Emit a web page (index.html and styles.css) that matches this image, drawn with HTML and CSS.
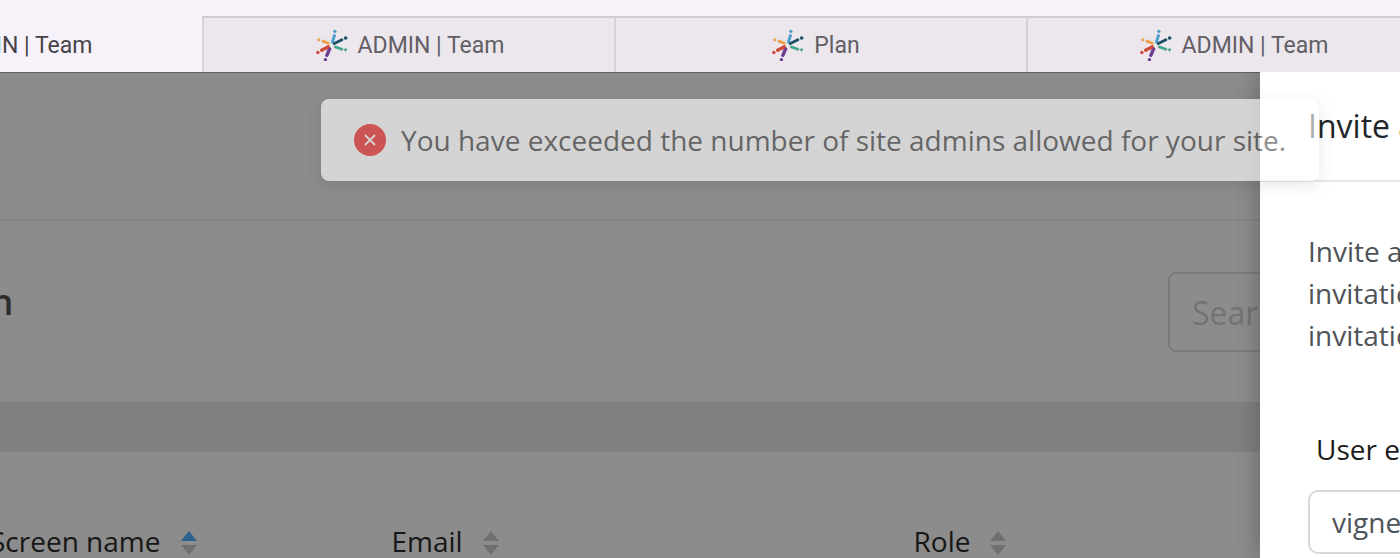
FILE: index.html
```html
<!DOCTYPE html>
<html lang="en">
<head>
<meta charset="utf-8">
<title>ADMIN | Team</title>
<link rel="stylesheet" href="styles.css">
</head>
<body>
<svg class="defs" width="0" height="0" aria-hidden="true">
  <symbol id="logo" viewBox="0 0 34 34">
    <g fill="none" stroke-linecap="round">
      <path d="M17.5 14 19.6 7" stroke="#4f9fc9" stroke-width="3.2"/>
      <circle cx="20" cy="2.5" r="1.8" fill="#4f9fc9"/>
      <path d="M19.5 15.5 27.5 11.5" stroke="#1c4f63" stroke-width="3"/>
      <circle cx="31.5" cy="9.5" r="1.9" fill="#1c4f63"/>
      <path d="M20.5 19 27.5 21.5" stroke="#4aa58d" stroke-width="3"/>
      <circle cx="31.5" cy="22" r="1.6" fill="#4aa58d"/>
      <path d="M14.5 21 11.5 28" stroke="#6a3a97" stroke-width="3.6"/>
      <circle cx="10" cy="32.5" r="1.8" fill="#6a3a97"/>
      <path d="M13 19 6 22.5" stroke="#d24a3a" stroke-width="3.6"/>
      <circle cx="2" cy="25" r="1.8" fill="#d24a3a"/>
      <path d="M13 15 7.5 13" stroke="#e9a34e" stroke-width="3.2"/>
      <circle cx="3" cy="11.5" r="1.7" fill="#e9a34e"/>
    </g>
  </symbol>
  <symbol id="sort" viewBox="0 0 16 24">
    <path fill="var(--sort-up, #cdcdcd)" d="M8 0 16 10H0Z"/>
    <path fill="#cdcdcd" d="M0 14H16L8 24Z"/>
  </symbol>
</svg>

<nav class="tabs">
  <div class="tab tab-active"><svg class="logo"><use href="#logo"/></svg><span>ADMIN | Team</span></div>
  <div class="tab"><svg class="logo"><use href="#logo"/></svg><span>ADMIN | Team</span></div>
  <div class="tab tab-plan"><svg class="logo"><use href="#logo"/></svg><span>Plan</span></div>
  <div class="tab"><svg class="logo"><use href="#logo"/></svg><span>ADMIN | Team</span></div>
</nav>

<div class="stage">
  <main class="page">
    <div class="topbar"></div>
    <div class="title-row">
      <h1 class="page-title">Admin</h1>
      <input class="search" type="text" placeholder="Search" aria-label="Search">
    </div>
    <div class="band"></div>
    <div class="table-head">
      <div class="col col-name">Screen name <svg class="sort active"><use href="#sort"/></svg></div>
      <div class="col col-email">Email <svg class="sort"><use href="#sort"/></svg></div>
      <div class="col col-role">Role <svg class="sort"><use href="#sort"/></svg></div>
    </div>
  </main>

  <div class="backdrop"></div>

  <aside class="drawer">
    <h2 class="drawer-title">Invite a user</h2>
    <div class="drawer-body">
      <p class="intro">Invite a new user<br>invitation will be<br>invitation link</p>
      <label class="field-label">User email</label>
      <input class="field-input" type="text" value="vignesh@example.com" aria-label="User email">
    </div>
  </aside>

  <div class="toast">
    <span class="toast-icon"><svg viewBox="0 0 32 32"><circle cx="16" cy="16" r="16" fill="#f23434"/><path d="M11.5 11.5 20.5 20.5M20.5 11.5 11.5 20.5" stroke="#fff" stroke-width="1.8" stroke-linecap="round"/></svg></span>
    <span>You have exceeded the number of site admins allowed for your site.</span>
  </div>
</div>
</body>
</html>
```
FILE: styles.css
```css
* { box-sizing: border-box; }
html, body { margin: 0; height: 100%; }
body {
  width: 1400px;
  height: 558px;
  overflow: hidden;
  background: #f7f2f9;
  font-family: "Open Sans", "Liberation Sans", sans-serif;
  display: flex;
  flex-direction: column;
}
.defs { position: absolute; }

.tabs {
  display: flex;
  flex: none;
  height: 72px;
  padding-top: 16px;
  margin-left: -210px;
  width: 1648px;
}
.tab {
  flex: 0 0 412px;
  display: flex;
  align-items: center;
  justify-content: center;
  gap: 10px;
  padding-left: 2px;
  background: #ece6ed;
  border-top: 2px solid #cfcbd0;
  border-left: 2px solid #d6d2d7;
  font-family: Roboto, Inter, sans-serif;
  font-size: 23px;
  color: #625e66;
}
.tab-active {
  padding: 2px 0 0 4px;
  background: #f7f2f9;
  border: 0;
  color: #46434a;
}
.tab-plan { padding-right: 12px; }
.logo { width: 32px; height: 32px; flex: none; }

.stage {
  position: relative;
  flex: 1;
  overflow: hidden;
}
.page {
  width: 1600px;
  margin-left: -100px;
  background: #fff;
  height: 100%;
  color: #2b2b2b;
}
.topbar {
  height: 149px;
  border-bottom: 2px solid #f0f0f0;
}
.title-row {
  display: flex;
  justify-content: space-between;
  align-items: flex-start;
  padding-top: 51px;
}
.page-title {
  margin: 0;
  width: 112px;
  text-align: right;
  font-size: 36px;
  font-weight: 600;
  line-height: 60px;
  color: #555;
}
.search {
  width: 332px;
  height: 80px;
  padding: 0 22px;
  border: 2px solid #dcdfe2;
  border-radius: 8px;
  background: #fff;
  font: 32px "Open Sans", sans-serif;
}
.search::placeholder { color: #d2d2d2; opacity: 1; }
.band {
  height: 50px;
  margin-top: 50px;
  background: #e8e9eb;
}
.table-head {
  display: grid;
  grid-template-columns: 400px 522px 300px;
  padding: 70px 0 0 90px;
  font-size: 28px;
  line-height: 38px;
  white-space: nowrap;
}
.col-email { padding-left: 1.5px; }
.col-role { padding-left: 1.5px; }
.col { display: flex; align-items: center; gap: 20px; }
.col-name { gap: 21px; }
.sort { width: 16px; height: 24px; flex: none; margin-top: 4px; }
.sort.active { --sort-up: #52b0ff; }

.backdrop {
  position: absolute;
  inset: 0;
  background: rgba(0, 0, 0, .45);
  border-top: 1px solid rgba(0, 0, 0, .3);
}
.drawer {
  position: absolute;
  top: 0;
  left: 1260px;
  width: 560px;
  bottom: 0;
  background: #fff;
  box-shadow: -6px 0 18px rgba(0, 0, 0, .18);
  color: #212529;
  white-space: nowrap;
}
.drawer-title {
  margin: 0;
  height: 110px;
  padding: 31px 48px 0;
  font-size: 32px;
  font-weight: 400;
  line-height: 46px;
  border-bottom: 2px solid #e9e9e9;
}
.drawer-body { padding: 48px 48px 0; }
.intro {
  margin: 0;
  font-size: 28px;
  line-height: 42px;
  color: #4e5358;
}
.field-label {
  display: block;
  margin: 74px 0 22px 8px;
  font-size: 28px;
  line-height: 38px;
  color: #1c1c1c;
}
.field-input {
  display: block;
  width: 460px;
  height: 64px;
  padding: 0 22px;
  border: 2px solid #d8d8d8;
  border-radius: 10px;
  font: 28px "Open Sans", sans-serif;
  color: #4e5358;
}

.toast {
  position: absolute;
  top: 27px;
  left: 321px;
  width: 998px;
  height: 82px;
  display: flex;
  align-items: center;
  gap: 15px;
  padding-left: 33px;
  background: #fff;
  border-radius: 8px;
  box-shadow: 0 4px 16px rgba(0, 0, 0, .15);
  opacity: .63;
  font-size: 28px;
  color: #4f4f4f;
  white-space: nowrap;
}
.toast-icon { width: 32px; height: 32px; flex: none; display: flex; }
.toast-icon svg { width: 100%; height: 100%; }
```
